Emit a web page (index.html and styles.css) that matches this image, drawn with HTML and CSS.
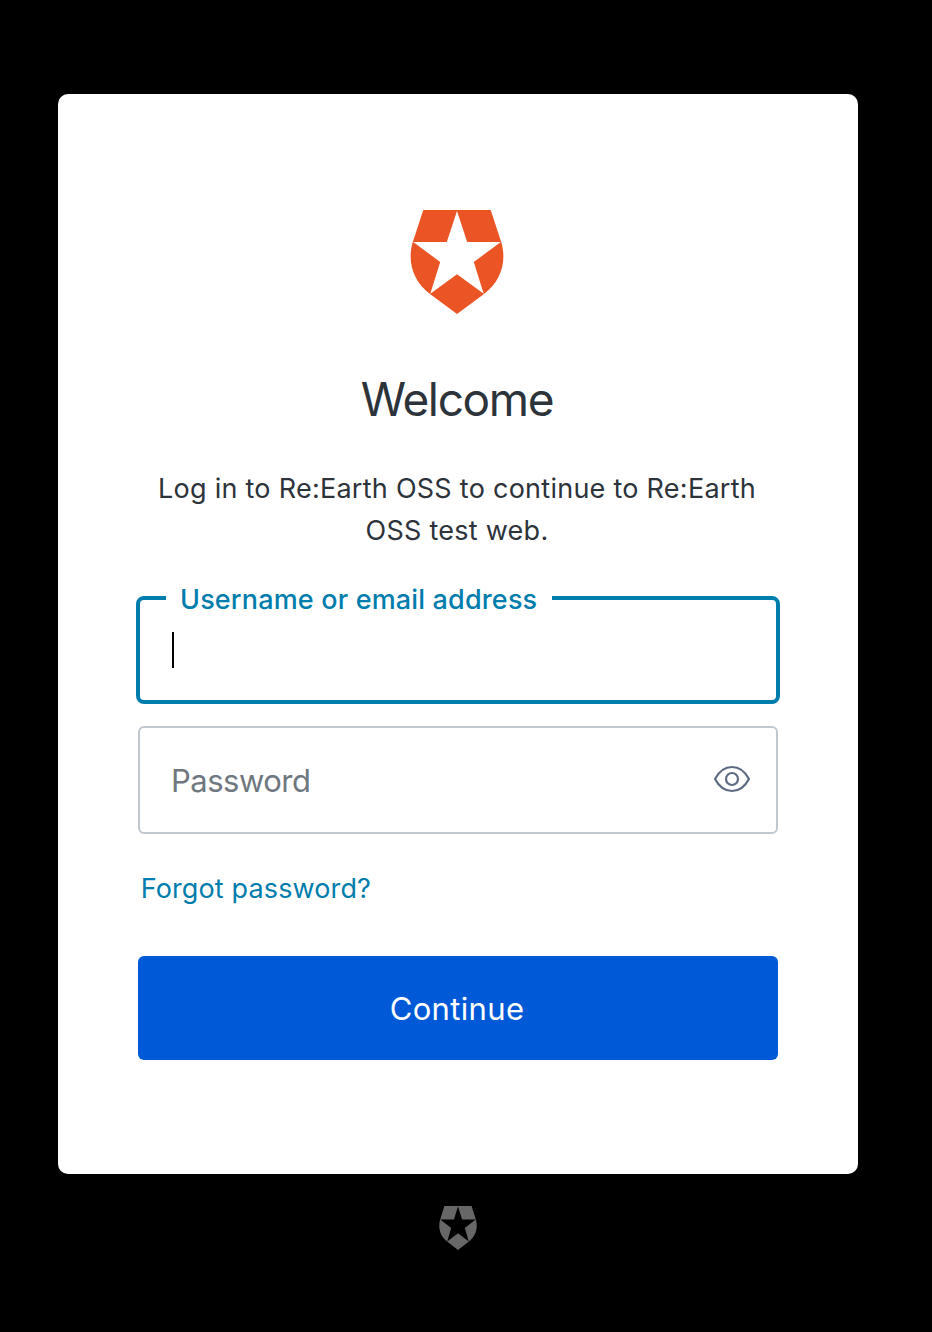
FILE: index.html
```html
<!DOCTYPE html>
<html lang="en">
<head>
<meta charset="utf-8">
<title>Log in | Re:Earth OSS</title>
<link rel="stylesheet" href="styles.css">
</head>
<body>
<main class="card">
  <svg class="logo" width="94" height="104" viewBox="410 210 94 104" aria-label="Auth0">
    <path fill="#eb5424" fill-rule="evenodd" d="M423.3 210H490.7L501.2 242C507.2 262 500.5 281.500 484 294L457 314L430 294C413.500 281.500 406.800 262 412.800 242ZM457 211L446.800 242H413.200L440.200 262L430.300 293.700L457 274.200L483.700 293.700L473.800 262L500.800 242H467.200Z"/>
  </svg>
  <h1 class="title">Welcome</h1>
  <p class="intro">Log in to Re:Earth OSS to continue to Re:Earth<br>OSS test web.</p>
  <form class="form">
    <div class="field focused">
      <label class="label">Username or email address</label>
      <i class="caret"></i>
    </div>
    <div class="field password">
      <span class="placeholder">Password</span>
      <svg class="eye" width="40" height="32" viewBox="0 0 40 32" fill="none" stroke="#5d6b82" stroke-width="2.200">
        <path stroke-linejoin="round" d="M3 16C7 8.500 13.500 4 20 4S33 8.500 37 16C33 23.500 26.500 28 20 28S7 23.500 3 16Z"/>
        <circle cx="20" cy="16" r="6"/>
      </svg>
    </div>
    <a class="forgot">Forgot password?</a>
    <button class="submit" type="button">Continue</button>
  </form>
</main>
<footer class="badge">
  <svg width="38" height="44" viewBox="410 210 94 104" preserveAspectRatio="none">
    <path fill="#676767" fill-rule="evenodd" d="M423.3 210H490.7L501.2 242C507.2 262 500.5 281.500 484 294L457 314L430 294C413.500 281.500 406.800 262 412.800 242ZM457 211L446.800 242H413.200L440.200 262L430.300 293.700L457 274.200L483.700 293.700L473.800 262L500.800 242H467.200Z"/>
  </svg>
</footer>
</body>
</html>
```
FILE: styles.css
```css
* { box-sizing: border-box; }
body {
  margin: 0;
  height: 1332px;
  padding: 94px 0 0 58px;
  background: #000;
  color: #2d333a;
  font-family: Inter, "Liberation Sans", sans-serif;
}
.card {
  display: flex;
  flex-direction: column;
  align-items: center;
  width: 800px;
  height: 1080px;
  padding: 116px 78px 0;
  background: #fff;
  border-radius: 10px;
}
.logo { display: block; margin-right: 2px; }
.title {
  margin: 55px 2px 0 0;
  font-size: 46px;
  line-height: 60px;
  font-weight: 400;
  letter-spacing: -1.350px;
}
.intro {
  margin: 39px 2px 0 0;
  font-size: 27px;
  line-height: 42px;
  letter-spacing: 0.260px;
  text-align: center;
  white-space: nowrap;
}
.form {
  display: flex;
  flex-direction: column;
  align-items: center;
  width: 644px;
  margin-top: 44px;
}
.field {
  position: relative;
  display: flex;
  height: 108px;
}
.focused {
  width: 644px;
  padding: 32px;
  border: 4px solid #007dad;
  border-radius: 8px;
}
.label {
  position: absolute;
  left: 26px;
  top: -20px;
  width: 385.500px;
  padding-left: 14px;
  background: #fff;
  color: #007dad;
  font-size: 27px;
  line-height: 40px;
  font-weight: 500;
  letter-spacing: 0.160px;
  white-space: nowrap;
}
.caret {
  width: 2px;
  height: 36px;
  background: #000;
}
.password {
  width: 640px;
  margin-top: 22px;
  padding: 0 24px 0 31px;
  align-items: center;
  justify-content: space-between;
  border: 2px solid #c2c8d0;
  border-radius: 6px;
}
.placeholder {
  margin-top: 2px;
  color: #6f7780;
  font-size: 31px;
  line-height: 40px;
  letter-spacing: -0.500px;
}
.eye { margin-top: -2px; }
.forgot {
  align-self: flex-start;
  margin: 34px 0 0 4.700px;
  color: #007dad;
  font-size: 27px;
  line-height: 42px;
  letter-spacing: 0.130px;
}
.submit {
  width: 640px;
  height: 104px;
  margin-top: 46px;
  padding: 2px 2px 0 0;
  border: 0;
  border-radius: 6px;
  background: #0059d6;
  color: #fff;
  font: 400 31px/40px Inter, sans-serif;
  letter-spacing: 0.350px;
}
.badge {
  display: flex;
  justify-content: center;
  width: 800px;
  padding-top: 32px;
}
```
